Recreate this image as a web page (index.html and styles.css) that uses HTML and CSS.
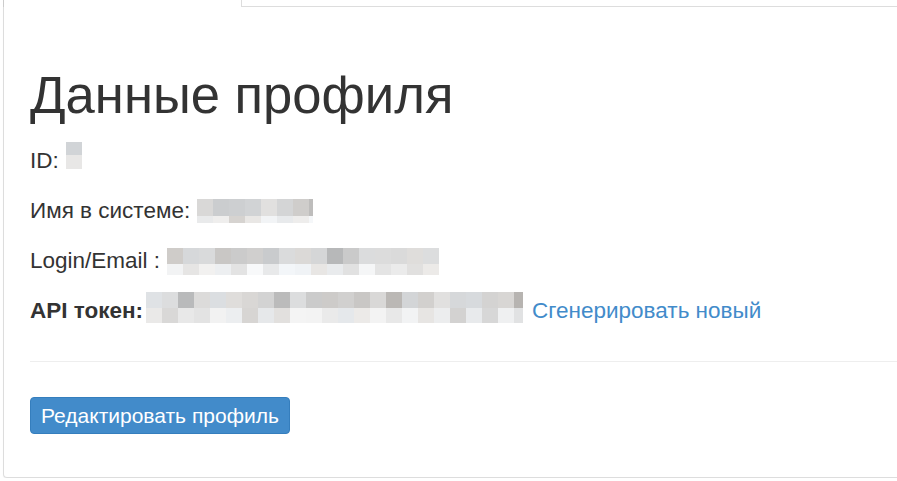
FILE: index.html
```html
<!DOCTYPE html>
<html lang="ru">
<head>
    <meta charset="UTF-8">
    <title>Данные профиля</title>
    <link rel="stylesheet" href="styles.css">
</head>
<body>

<div class="page">
    <!-- вкладки -->
    <ul class="nav-tabs">
        <li class="tab active"></li>
        <li class="tab-rest"></li>
    </ul>

    <div class="tab-panel">
        <h1>Данные профиля</h1>

        <div class="field"><span>ID:</span><span class="blur blur-id" data-cols="1" data-rows="13,14" data-seed="3"></span></div>
        <div class="field"><span>Имя в системе:</span><span class="blur blur-name" data-cols="8" data-rows="17,7" data-seed="11"></span></div>
        <div class="field"><span>Login/Email :</span><span class="blur blur-login" data-cols="17" data-rows="16,11" data-seed="27"></span></div>
        <div class="field"><b>API токен:</b><span class="blur blur-token" data-cols="24" data-rows="16,15" data-seed="42"></span><a href="#" class="link">Сгенерировать новый</a></div>

        <hr class="divider">

        <button class="btn btn-primary">Редактировать профиль</button>
    </div>
</div>

<script src="script.js"></script>
</body>
</html>
```

FILE: styles.css
```css
body {
    font-family: "Liberation Sans", Arial, sans-serif;
    color: #333333;
    background-color: #ffffff;
    margin: 0;
    overflow: hidden;
}

.page {
    padding-left: 3px;
    width: 940px;
}

/* вкладки */
.nav-tabs {
    display: flex;
    height: 7px;
    margin: 0;
    padding: 0;
    list-style: none;
}

.tab.active {
    width: 237px;
    border-left: 1px solid #cccccc;
    border-right: 1px solid #dddddd;
}

.tab-rest {
    flex: 1;
    border-bottom: 1px solid #dddddd;
}

/* панель */
.tab-panel {
    height: 471px;
    box-sizing: border-box;
    padding: 20px 26px;
    border: 1px solid #dddddd;
    border-top: none;
    border-radius: 0 0 4px 4px;
    box-shadow: 0 1px 1px rgba(0,0,0,0.05);
}

.tab-panel h1 {
    font-size: 52.6px;
    font-weight: 500;
    line-height: 1.1;
    margin: 39px 0 22px 0;
}

.field {
    display: flex;
    align-items: center;
    height: 30px;
    font-size: 22.5px;
    line-height: 30px;
    margin: 0 0 20px 0;
    white-space: nowrap;
}

.field b {
    font-weight: bold;
}

/* размытые значения */
.blur {
    display: grid;
    flex: none;
    overflow: hidden;
    margin-left: 7px;
}

.blur span {
    display: block;
}

.blur-id { width: 16px; margin-bottom: 10px; }
.blur-name { width: 116px; }
.blur-login { width: 272px; margin-top: 2px; }
.blur-token { width: 377px; margin-bottom: 6px; margin-left: 3px; }

.link {
    color: #428bca;
    text-decoration: none;
    margin-left: 9px;
}

.divider {
    border: 0;
    border-top: 1px solid #eeeeee;
    margin: 35px -40px 35px 0;
}

.btn {
    font-family: inherit;
    font-size: 21px;
    line-height: 29px;
    padding: 3px 10px;
    border-radius: 4px;
    cursor: pointer;
}

.btn-primary {
    color: #ffffff;
    background-color: #428bca;
    border: 1px solid #357ebd;
}

.btn-primary:hover {
    background-color: #3276b1;
}
```

FILE: script.js
```javascript
// пиксельная "маска" для скрытых данных
function seededRandom(seed) {
    let s = seed;
    return function () {
        s = (s * 9301 + 49297) % 233280;
        return s / 233280;
    };
}

document.querySelectorAll('.blur').forEach((el) => {
    const cols = parseInt(el.dataset.cols, 10);
    const rows = el.dataset.rows.split(',').map(Number);
    const rand = seededRandom(parseInt(el.dataset.seed, 10));

    el.style.gridTemplateColumns = `repeat(${cols}, 16px)`;
    el.style.gridTemplateRows = rows.map((h) => h + 'px').join(' ');

    rows.forEach((h, r) => {
        for (let c = 0; c < cols; c++) {
            const cell = document.createElement('span');
            // верхний ряд темнее, нижний светлее
            const base = r === 0 ? 200 : 222;
            const v = Math.round(base + rand() * 26 - (rand() < 0.08 ? 30 : 0));
            const tint = Math.round(rand() * 6 - 3);
            cell.style.background = `rgb(${v}, ${v + tint}, ${v + tint * 2})`;
            el.appendChild(cell);
        }
    });
});
```
